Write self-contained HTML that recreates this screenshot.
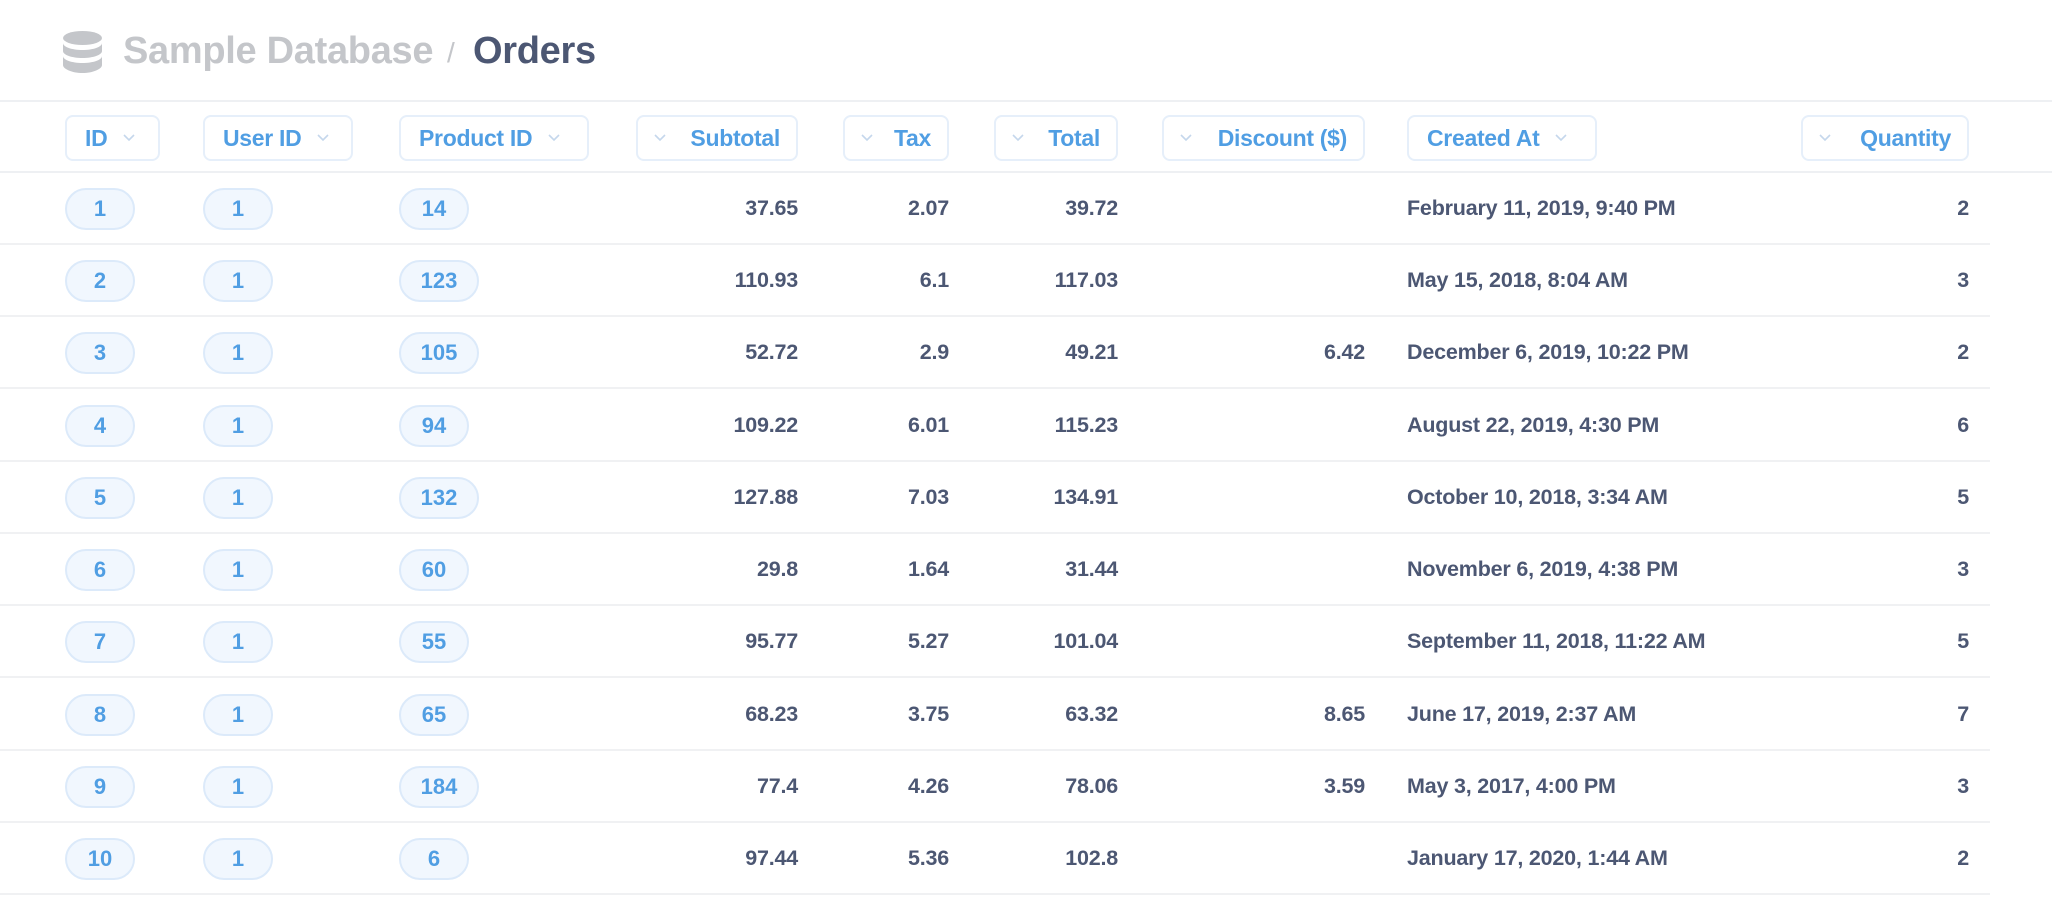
<!DOCTYPE html>
<html><head><meta charset="utf-8"><style>
*{margin:0;padding:0;box-sizing:border-box}
body{width:2052px;height:898px;background:#fff;font-family:"Liberation Sans",sans-serif;position:relative;overflow:hidden;color:#4c5773}
.t{position:absolute;top:29px;font-size:38px;font-weight:bold;line-height:44px;letter-spacing:-0.3px}
.hl{position:absolute;left:0;width:2052px;height:2px;background:#eef0f3}
.hp{position:absolute;top:115px;height:46px;border:2px solid #e6effa;border-radius:8px;color:#509ee3;font-weight:bold;font-size:23px;line-height:42px;padding:0 18px;display:flex;align-items:center;gap:16px;letter-spacing:-0.3px}
.hp.rt{justify-content:space-between;padding:0 16px 0 16px}
.hp svg{flex:none}
.row{position:absolute;left:0;width:1990px;height:72px;border-bottom:2px solid #f0f1f3}
.p{position:absolute;top:15px;height:42px;border:2px solid #dceafa;background:#f1f7fe;border-radius:21px;color:#509ee3;font-weight:bold;font-size:22px;line-height:38px;text-align:center}
.c{position:absolute;top:0;line-height:70px;font-weight:bold;font-size:21.5px;color:#4c5773;letter-spacing:-0.2px}
.r{text-align:right}
.c1{left:600px;width:198px}.c2{left:800px;width:149px}.c3{left:960px;width:158px}.c4{left:1200px;width:165px}.c5{left:1407px;width:380px}.c6{left:1800px;width:169px}
</style></head><body>
<svg style="position:absolute;left:63px;top:31px" width="39" height="42" viewBox="0 0 39 42"><g fill="#c4c6ca"><ellipse cx="19.5" cy="7" rx="19.5" ry="7"/><path d="M0 12c0 4 9 7 19.5 7S39 16 39 12v8c0 4-9 7-19.5 7S0 24 0 20z"/><path d="M0 25c0 4 9 7 19.5 7S39 29 39 25v9c0 4-9 8-19.5 8S0 38 0 34z"/></g></svg>
<div class="t" style="left:123px;color:#c4c6ca">Sample Database</div>
<div class="t" style="left:447px;color:#c4c6ca;font-weight:normal;font-size:28px;top:31px">/</div>
<div class="t" style="left:473px;color:#4c5773">Orders</div>
<div class="hl" style="top:100px"></div>
<div class="hl" style="top:171px"></div>

<div class="hp" style="left:65px;width:95px">ID <svg width="12" height="8"><polyline points="1,1 6,6 11,1" fill="none" stroke="#c5d7ec" stroke-width="1.6"/></svg></div>
<div class="hp" style="left:203px;width:150px">User ID <svg width="12" height="8"><polyline points="1,1 6,6 11,1" fill="none" stroke="#c5d7ec" stroke-width="1.6"/></svg></div>
<div class="hp" style="left:399px;width:190px">Product ID <svg width="12" height="8"><polyline points="1,1 6,6 11,1" fill="none" stroke="#c5d7ec" stroke-width="1.6"/></svg></div>
<div class="hp rt" style="left:636px;width:162px"><svg width="12" height="8"><polyline points="1,1 6,6 11,1" fill="none" stroke="#c5d7ec" stroke-width="1.6"/></svg>Subtotal</div>
<div class="hp rt" style="left:843px;width:106px"><svg width="12" height="8"><polyline points="1,1 6,6 11,1" fill="none" stroke="#c5d7ec" stroke-width="1.6"/></svg>Tax</div>
<div class="hp rt" style="left:994px;width:124px"><svg width="12" height="8"><polyline points="1,1 6,6 11,1" fill="none" stroke="#c5d7ec" stroke-width="1.6"/></svg>Total</div>
<div class="hp rt" style="left:1162px;width:203px"><svg width="12" height="8"><polyline points="1,1 6,6 11,1" fill="none" stroke="#c5d7ec" stroke-width="1.6"/></svg>Discount ($)</div>
<div class="hp" style="left:1407px;width:190px">Created At <svg width="12" height="8"><polyline points="1,1 6,6 11,1" fill="none" stroke="#c5d7ec" stroke-width="1.6"/></svg></div>
<div class="hp rt" style="left:1801px;width:168px"><svg width="12" height="8"><polyline points="1,1 6,6 11,1" fill="none" stroke="#c5d7ec" stroke-width="1.6"/></svg>Quantity</div>

<div class="row" style="top:173px"><div class="p" style="left:65px;width:70px">1</div><div class="p" style="left:203px;width:70px">1</div><div class="p" style="left:399px;width:70px">14</div><div class="c r c1">37.65</div><div class="c r c2">2.07</div><div class="c r c3">39.72</div><div class="c r c4"></div><div class="c c5">February 11, 2019, 9:40 PM</div><div class="c r c6">2</div></div>
<div class="row" style="top:245px"><div class="p" style="left:65px;width:70px">2</div><div class="p" style="left:203px;width:70px">1</div><div class="p" style="left:399px;width:80px">123</div><div class="c r c1">110.93</div><div class="c r c2">6.1</div><div class="c r c3">117.03</div><div class="c r c4"></div><div class="c c5">May 15, 2018, 8:04 AM</div><div class="c r c6">3</div></div>
<div class="row" style="top:317px"><div class="p" style="left:65px;width:70px">3</div><div class="p" style="left:203px;width:70px">1</div><div class="p" style="left:399px;width:80px">105</div><div class="c r c1">52.72</div><div class="c r c2">2.9</div><div class="c r c3">49.21</div><div class="c r c4">6.42</div><div class="c c5">December 6, 2019, 10:22 PM</div><div class="c r c6">2</div></div>
<div class="row" style="top:390px"><div class="p" style="left:65px;width:70px">4</div><div class="p" style="left:203px;width:70px">1</div><div class="p" style="left:399px;width:70px">94</div><div class="c r c1">109.22</div><div class="c r c2">6.01</div><div class="c r c3">115.23</div><div class="c r c4"></div><div class="c c5">August 22, 2019, 4:30 PM</div><div class="c r c6">6</div></div>
<div class="row" style="top:462px"><div class="p" style="left:65px;width:70px">5</div><div class="p" style="left:203px;width:70px">1</div><div class="p" style="left:399px;width:80px">132</div><div class="c r c1">127.88</div><div class="c r c2">7.03</div><div class="c r c3">134.91</div><div class="c r c4"></div><div class="c c5">October 10, 2018, 3:34 AM</div><div class="c r c6">5</div></div>
<div class="row" style="top:534px"><div class="p" style="left:65px;width:70px">6</div><div class="p" style="left:203px;width:70px">1</div><div class="p" style="left:399px;width:70px">60</div><div class="c r c1">29.8</div><div class="c r c2">1.64</div><div class="c r c3">31.44</div><div class="c r c4"></div><div class="c c5">November 6, 2019, 4:38 PM</div><div class="c r c6">3</div></div>
<div class="row" style="top:606px"><div class="p" style="left:65px;width:70px">7</div><div class="p" style="left:203px;width:70px">1</div><div class="p" style="left:399px;width:70px">55</div><div class="c r c1">95.77</div><div class="c r c2">5.27</div><div class="c r c3">101.04</div><div class="c r c4"></div><div class="c c5">September 11, 2018, 11:22 AM</div><div class="c r c6">5</div></div>
<div class="row" style="top:679px"><div class="p" style="left:65px;width:70px">8</div><div class="p" style="left:203px;width:70px">1</div><div class="p" style="left:399px;width:70px">65</div><div class="c r c1">68.23</div><div class="c r c2">3.75</div><div class="c r c3">63.32</div><div class="c r c4">8.65</div><div class="c c5">June 17, 2019, 2:37 AM</div><div class="c r c6">7</div></div>
<div class="row" style="top:751px"><div class="p" style="left:65px;width:70px">9</div><div class="p" style="left:203px;width:70px">1</div><div class="p" style="left:399px;width:80px">184</div><div class="c r c1">77.4</div><div class="c r c2">4.26</div><div class="c r c3">78.06</div><div class="c r c4">3.59</div><div class="c c5">May 3, 2017, 4:00 PM</div><div class="c r c6">3</div></div>
<div class="row" style="top:823px"><div class="p" style="left:65px;width:70px">10</div><div class="p" style="left:203px;width:70px">1</div><div class="p" style="left:399px;width:70px">6</div><div class="c r c1">97.44</div><div class="c r c2">5.36</div><div class="c r c3">102.8</div><div class="c r c4"></div><div class="c c5">January 17, 2020, 1:44 AM</div><div class="c r c6">2</div></div>
</body></html>
